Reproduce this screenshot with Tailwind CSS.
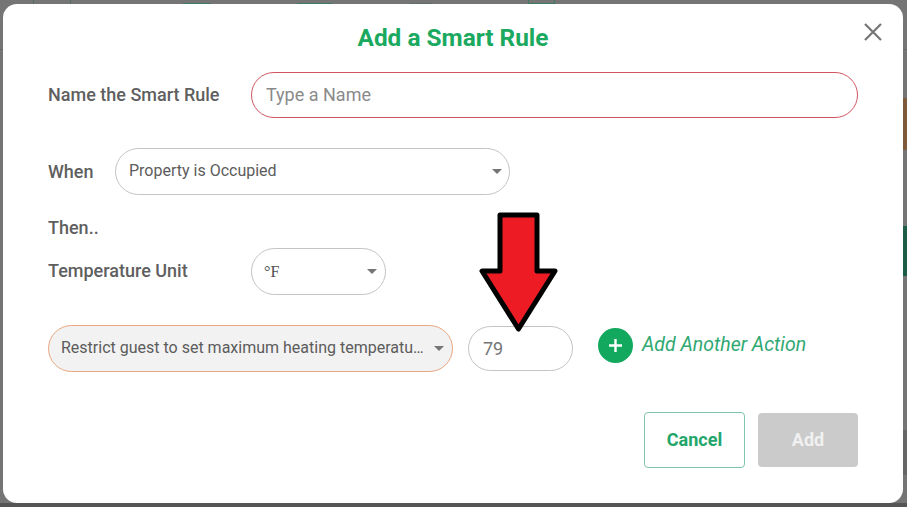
<!DOCTYPE html>
<html>
<head>
<meta charset="utf-8">
<script src="https://cdn.jsdelivr.net/npm/@tailwindcss/browser@4"></script>
</head>
<body class="m-0 overflow-hidden">
<div class="relative w-[907px] h-[507px] bg-[#757575] font-['Roboto',sans-serif] overflow-hidden">
    <!-- page behind the overlay -->
    <div class="absolute left-0 right-0 top-0 h-[4px] flex">
        <div class="ml-[33px] w-[38px] h-full border-x border-[#4f6f60]"></div>
        <div class="ml-[112px] w-[28px] h-full border-b border-[#3f7a60]"></div>
        <div class="ml-[86px] w-[35px] h-full border-b border-[#3f7a60]"></div>
        <div class="ml-[78px] w-[22px] h-full border-b border-[#5f6f68]"></div>
        <div class="ml-[96px] w-[27px] h-full border-x border-b border-[#3f7a60]"></div>
    </div>
    <div class="absolute left-0 right-0 top-[49px] h-px bg-[#666666]"></div>
    <div class="absolute right-0 top-[98px] w-[6px] h-[52px] bg-[#7f5a3a]"></div>
    <div class="absolute right-0 top-[226px] w-[6px] h-[50px] bg-[#1d5c45]"></div>
    <div class="absolute right-0 top-[430px] w-[6px] h-[45px] bg-[#666666]"></div>
    <div class="absolute left-0 right-0 bottom-0 h-[4px] bg-[#555555]"></div>

    <!-- modal -->
    <div class="absolute left-[3px] top-[4px] w-[900px] h-[499px] bg-white rounded-[14px] pl-[45px] pr-[45px] pt-[19px]">
        <h1 class="text-center text-[24.4px] leading-[30px] font-bold text-[#1aa95f]">Add a Smart Rule</h1>
        <svg class="absolute right-[21px] top-[19px] w-[18px] h-[18px]" viewBox="0 0 18 18" fill="none" stroke="#757575" stroke-width="2.2"><path d="M1 1 L17 17 M17 1 L1 17"/></svg>

        <div class="flex items-center mt-[19px]">
            <label class="w-[203px] pb-[1px] text-[18px] font-medium text-[#5f5f5f]">Name the Smart Rule</label>
            <div class="w-[607px] h-[46px] rounded-full border border-[#d0555f] flex items-center px-[14px] pb-[2px] text-[18px] text-[#8a8a8a]">Type a Name</div>
        </div>

        <div class="flex items-center mt-[30px]">
            <label class="w-[67px] pb-[1px] text-[18px] font-medium text-[#5f5f5f]">When</label>
            <div class="w-[395px] h-[47px] rounded-full border border-[#c4c4c4] flex items-center justify-between pl-[13px] pr-[7px] text-[16px] text-[#5c5c5c]">
                <span class="pb-[2px]">Property is Occupied</span>
                <span class="w-0 h-0 border-x-[5px] border-x-transparent border-t-[5px] border-t-[#757575]"></span>
            </div>
        </div>

        <div class="mt-[22px] text-[18px] leading-[22px] font-medium text-[#5f5f5f]">Then..</div>

        <div class="flex items-center mt-[9px]">
            <label class="w-[203px] pb-[2px] text-[18px] font-medium text-[#5f5f5f]">Temperature Unit</label>
            <div class="w-[135px] h-[47px] rounded-full border border-[#c4c4c4] flex items-center justify-between pl-[12px] pr-[8px] text-[16px] text-[#4f4f4f] font-['Liberation_Serif',serif]">
                <span>°F</span>
                <span class="w-0 h-0 border-x-[5px] border-x-transparent border-t-[5px] border-t-[#757575]"></span>
            </div>
        </div>

        <div class="flex items-center mt-[30px]">
            <div class="w-[405px] h-[47px] rounded-full border border-[#e8a77e] bg-[#f2f2f2] flex items-center justify-between pl-[12px] pr-[8px] text-[16px] text-[#5c5c5c]">
                <span class="w-[365px] truncate pb-[2px]">Restrict guest to set maximum heating temperature</span>
                <span class="w-0 h-0 border-x-[5px] border-x-transparent border-t-[5px] border-t-[#757575]"></span>
            </div>
            <div class="ml-[15px] w-[105px] h-[45px] rounded-full border border-[#c4c4c4] flex items-center pl-[14px] text-[18px] text-[#757575]">79</div>
            <div class="ml-[25px] mb-[7px] w-[35px] h-[35px] rounded-full bg-[#12a95f] flex items-center justify-center">
                <svg class="w-[15px] h-[15px]" viewBox="0 0 15 15" stroke="#fff" stroke-width="2.4"><path d="M7.5 1 V14 M1 7.500 H14"/></svg>
            </div>
            <span class="ml-[9px] mb-[7px] text-[19.5px] italic text-[#2fa872]">Add Another Action</span>
        </div>

        <div class="flex justify-end items-center gap-[13px] mt-[40px]">
            <button class="w-[101px] h-[56px] pb-[2px] rounded-[4px] border border-[#7fc4ad] text-[18px] font-bold text-[#23a66c]">Cancel</button>
            <button class="w-[100px] h-[54px] pb-[2px] rounded-[4px] bg-[#cbcbcb] text-[18px] font-bold text-[#f1f1f1]">Add</button>
        </div>
    </div>

    <!-- annotation arrow -->
    <svg class="absolute left-[478px] top-[212px] w-[80px] h-[122px]" viewBox="0 0 80 122">
        <path d="M22 3 H59 V59 H77 L40.500 117 L4 59 H22 Z" fill="#ed1c24" stroke="#000" stroke-width="5" stroke-linejoin="round"/>
    </svg>
</div>
</body>
</html>
